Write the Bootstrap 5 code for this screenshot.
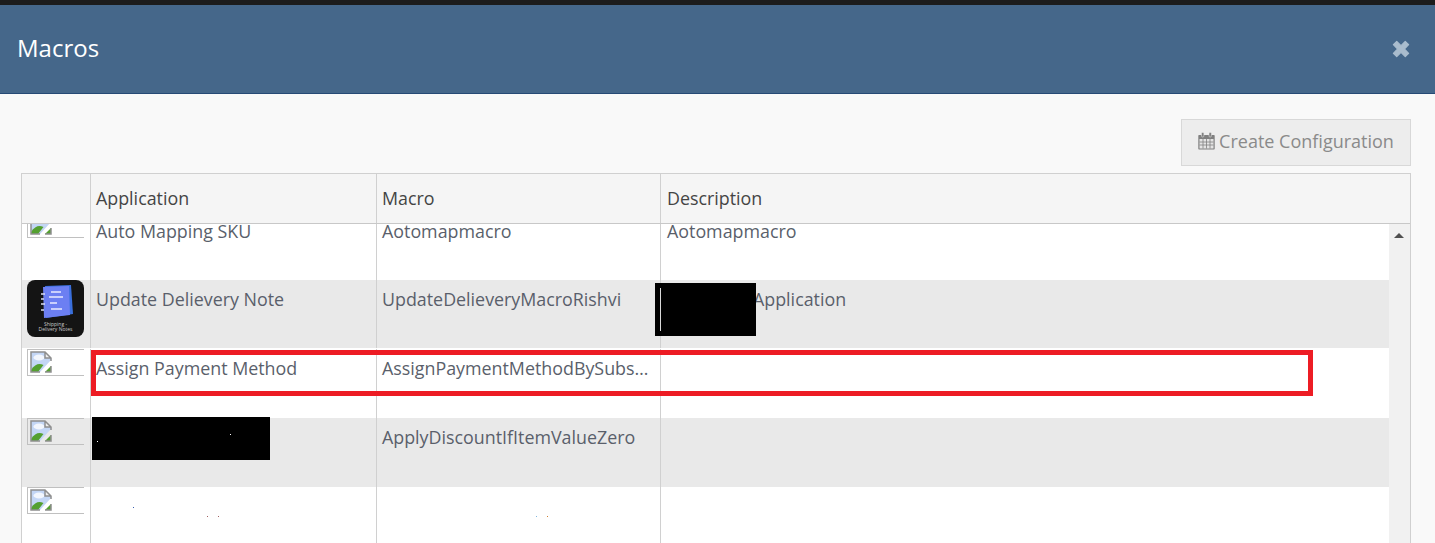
<!DOCTYPE html>
<html lang="en">
<head>
<meta charset="utf-8">
<title>Macros</title>
<link href="https://cdn.jsdelivr.net/npm/bootstrap@5.3.0/dist/css/bootstrap.min.css" rel="stylesheet">
<style>
html,body{height:543px;overflow:hidden}
body{background:#f9f9f9;font-family:"Open Sans","Noto Sans",sans-serif;font-size:17.85px;color:#5a5f6b;position:relative}
.topstrip{height:5px;background:#1c1c1c}
.modal-top{height:89px;background:#45678a;border-bottom:1px solid #264a75;padding:0 25px 0 17px}
.modal-name{font-size:24px;font-weight:400;color:#fff;margin:0;line-height:1;padding-bottom:2px}
.shut{color:#a9bccd;width:18px;height:18px;display:block;margin-bottom:1px}
.panel{padding:25px 24px 0 21px}
.cfg-btn,.cfg-btn:disabled{width:230px;height:47px;background:#ededed;border:1px solid #d8d8d8;border-radius:0;color:#8a8a8a;font-size:18px;line-height:1;padding:0 0 4px;opacity:1;gap:4px}
.grid-box{margin-top:7px;border:1px solid #d0d0d0;border-bottom:0;width:1390px;background:#fff}
.grid-head{height:50px;background:#f5f5f5;border-bottom:1px solid #c8c8c8;color:#444}
.cell{flex:none;border-right:1px solid #d0d0d0;padding:0 5px}
.w1{width:69px;padding:0}
.w2{width:286px}
.w3{width:284px}
.w4{flex:1 1 auto;border-right:0;padding-left:6px}
.grid-head .cell{padding-top:13px;line-height:23px}
.grid-scroll{height:320px}
.rows{width:1367px}
.rowline{background:#fff;height:69px;line-height:23px}
.rowline .cell{padding-top:8px}
.rowline .w1{padding:0 0 0 5px}
.alt{background:#e9e9e9}
.first{height:56px;line-height:14px}
.first .cell{padding-top:0}
.first .w1{height:56px;overflow:hidden}
.first .pic{margin-top:-13px}
.second{height:68px}
.gap1{height:1px;background:#fff}
.pic{display:block;width:57px;height:27px;border:1px solid #c0c0c0;border-right:0;padding:1px 0 0 2px}
.pic svg{display:block}
.appicon{display:block;width:57px;height:57px}
.app-cap{font-family:"Open Sans",sans-serif;font-size:5px;fill:#c9c9c9}
.behind{padding-left:92px}
.bar{flex:none;width:21px;background:#f1f1f1;position:relative}
.arrow{position:absolute;left:5px;top:9px;width:0;height:0;border-left:5px solid transparent;border-right:5px solid transparent;border-bottom:5px solid #505050}
.ink{position:absolute;background:#000}
.ink1{left:655px;top:283px;width:101px;height:53px}
.ink1::after{content:"";position:absolute;left:5px;top:5px;height:43px;width:1px;background:#d8d8d8}
.ink2{left:92px;top:417px;width:178px;height:43px}
.spot{position:absolute;width:1px;height:1px}
.spot-a{left:97px;top:441px;background:#fff}
.spot-b{left:230px;top:434px;background:#fff}
.spot-c{left:133px;top:507px;background:#3a5fb0}
.spot-d{left:207px;top:516px;background:#a06060}
.spot-e{left:218px;top:516px;background:#a06060}
.spot-f{left:536px;top:516px;background:#80b8e0}
.spot-g{left:547px;top:516px;background:#d08030}
.redbox{position:absolute;left:91px;top:350px;width:1222px;height:46px;border:5px solid #ed1c24}
</style>
</head>
<body>
<div class="topstrip"></div>
<header class="modal-top d-flex align-items-center justify-content-between">
  <h4 class="modal-name">Macros</h4>
  <svg class="shut" viewBox="0 0 16 16" aria-label="Close"><path d="M1.2 4.200 4.200 1.200 8 5 11.800 1.200 14.800 4.200 11 8 14.800 11.800 11.800 14.800 8 11 4.200 14.800 1.200 11.800 5 8Z" fill="currentColor" stroke="currentColor" stroke-width="1" stroke-linejoin="round"/></svg>
</header>
<main class="panel">
  <div class="d-flex justify-content-end">
    <button class="btn cfg-btn d-flex align-items-center justify-content-center" type="button" disabled>
      <svg width="17" height="18" viewBox="0 0 17 18"><path d="M1 3h15a.7.7 0 0 1 .7.7v13a.7.7 0 0 1-.7.7H1a.7.7 0 0 1-.7-.7v-13A.7.7 0 0 1 1 3Z" fill="#808080"/><rect x="1.500" y="7" width="14" height="9.500" fill="#e4e4e4"/><path d="M1.500 10h14M1.500 13h14M5 7v9.500M8.500 7v9.500M12 7v9.500" stroke="#808080" stroke-width=".8"/><rect x="3.500" y=".5" width="2.400" height="4.500" rx="1" fill="#808080" stroke="#ededed" stroke-width=".5"/><rect x="11" y=".5" width="2.400" height="4.500" rx="1" fill="#808080" stroke="#ededed" stroke-width=".5"/></svg>
      <span>Create Configuration</span>
    </button>
  </div>
  <div class="grid-box">
    <div class="grid-head d-flex">
      <div class="cell w1"></div>
      <div class="cell w2">Application</div>
      <div class="cell w3">Macro</div>
      <div class="cell w4">Description</div>
    </div>
    <div class="grid-scroll d-flex">
      <div class="rows">
        <div class="rowline first d-flex">
          <div class="cell w1"><span class="pic"><svg width="22" height="22" viewBox="0 0 22 22"><use href="#broken"/></svg></span></div>
          <div class="cell w2">Auto Mapping SKU</div>
          <div class="cell w3">Aotomapmacro</div>
          <div class="cell w4">Aotomapmacro</div>
        </div>
        <div class="rowline alt second d-flex">
          <div class="cell w1">
            <svg class="appicon" viewBox="0 0 57 57" role="img" aria-label="Shipping Delivery Notes">
              <rect width="57" height="57" rx="8" fill="#141414"/>
              <path d="M18 6 44 5 46 34 19 38Z" fill="#3a6fdc"/>
              <path d="M16 7 42 6 43 35 17 38Z" fill="#6c7ff2"/>
              <path d="M24 12h10M22 17h14M23 23h7M24 29h11" stroke="#e9ecff" stroke-width="1.600"/>
              <path d="M14 14h4M14 19h3M14 24h4M14 30h3" stroke="#d8dcf0" stroke-width="1.300"/>
              <text class="app-cap" x="28.500" y="46" text-anchor="middle">Shipping -</text>
              <text class="app-cap" x="28.500" y="51" text-anchor="middle">Delivery Notes</text>
            </svg>
          </div>
          <div class="cell w2">Update Delievery Note</div>
          <div class="cell w3">UpdateDelieveryMacroRishvi</div>
          <div class="cell w4 behind">Application</div>
        </div>
        <div class="gap1"></div>
        <div class="rowline d-flex">
          <div class="cell w1"><span class="pic"><svg width="22" height="22" viewBox="0 0 22 22"><use href="#broken"/></svg></span></div>
          <div class="cell w2">Assign Payment Method</div>
          <div class="cell w3 text-truncate">AssignPaymentMethodBySubscription</div>
          <div class="cell w4"></div>
        </div>
        <div class="rowline alt d-flex">
          <div class="cell w1"><span class="pic"><svg width="22" height="22" viewBox="0 0 22 22"><use href="#broken"/></svg></span></div>
          <div class="cell w2"></div>
          <div class="cell w3">ApplyDiscountIfItemValueZero</div>
          <div class="cell w4"></div>
        </div>
        <div class="rowline d-flex">
          <div class="cell w1"><span class="pic"><svg width="22" height="22" viewBox="0 0 22 22"><use href="#broken"/></svg></span></div>
          <div class="cell w2"></div>
          <div class="cell w3"></div>
          <div class="cell w4"></div>
        </div>
      </div>
      <div class="bar"><span class="arrow"></span></div>
    </div>
  </div>
</main>
<div class="ink ink1"></div>
<div class="ink ink2"></div>
<div class="redbox"></div>
<span class="spot spot-a"></span>
<span class="spot spot-b"></span>
<span class="spot spot-c"></span>
<span class="spot spot-d"></span>
<span class="spot spot-e"></span>
<span class="spot spot-f"></span>
<span class="spot spot-g"></span>
<svg width="0" height="0" class="d-none"><defs><g id="broken">
  <path d="M1 1H15L21 7V9L10 21H1Z" fill="#c3d6f5"/>
  <ellipse cx="9" cy="6.500" rx="5.500" ry="3" fill="#f2f6fd"/>
  <path d="M1 19C5 13 9 12 13.500 14L8 21H1Z" fill="#54a030"/>
  <path d="M21 15V21H15Z" fill="#54a030"/>
  <path d="M15 1V7H21Z" fill="#eee"/>
  <path d="M10 21H1V1H15L21 7V10M15 1V7H21M21 15V21H15" fill="none" stroke="#8f8f8f" stroke-width="1.500"/>
</g></defs></svg>
</body>
</html>
